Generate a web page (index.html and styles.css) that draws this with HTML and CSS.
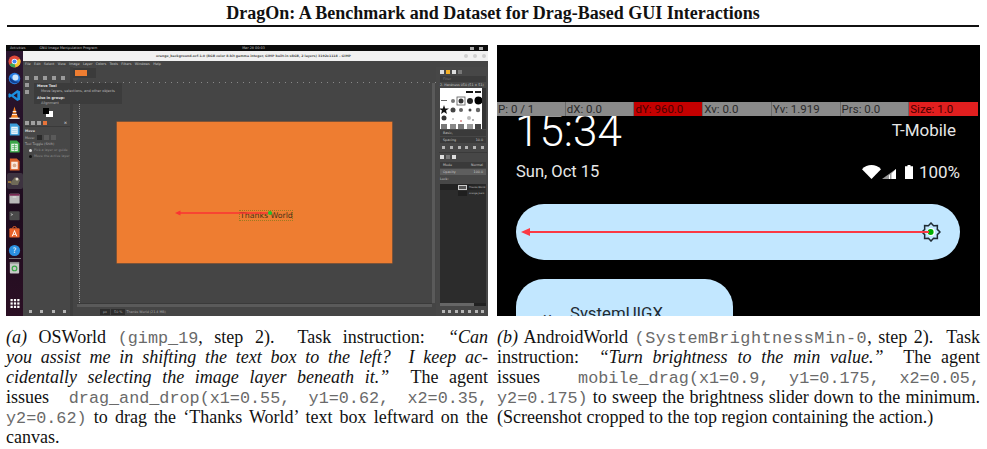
FILE: index.html
```html
<!DOCTYPE html>
<html lang="en">
<head>
    <meta charset="UTF-8">
    <meta name="viewport" content="width=device-width, initial-scale=1.0">
    <title>DragOn figure</title>
    <link rel="stylesheet" href="styles.css">
</head>
<body>
<header class="paper-head">DragOn: A Benchmark and Dataset for Drag-Based GUI Interactions</header>

<div class="figure-row">
    <figure class="sub-figure">
        <div class="shot desktop">
            <div class="top-bar">
                <span>Activities</span>
                <span class="top-app">GNU Image Manipulation Program</span>
                <span class="top-clock">Mar 28 00:03</span>
                <span class="top-tray"><i></i><i></i></span>
            </div>
            <div class="desk-body">
                <nav class="dock">
                    <svg class="dock-icon" viewBox="0 0 14 14"><circle cx="7" cy="7" r="6.5" fill="#e04a3a"/><path d="M7 7 1.500 10.500A6.500 6.500 0 0 0 8 13.400Z" fill="#3aa655"/><path d="M7 7 8 13.400A6.500 6.500 0 0 0 12.800 4Z" fill="#f4c430"/><circle cx="7" cy="7" r="3" fill="#fff"/><circle cx="7" cy="7" r="2.200" fill="#4285f4"/></svg>
                    <svg class="dock-icon" viewBox="0 0 14 14"><circle cx="7" cy="7" r="6.200" fill="#2a7de1"/><circle cx="8" cy="6" r="3.200" fill="#cfe6fb"/><path d="M2 5C4 8 7 11 12 10 10 13 4 13 2 9Z" fill="#123f8f"/></svg>
                    <svg class="dock-icon" viewBox="0 0 14 14"><path d="M10 1 13 2.500V11.500L10 13 3.500 8 1.500 9.500 0.500 8.700V5.300L1.500 4.500 3.500 6ZM10 4.300 6 7 10 9.700Z" fill="#1c8fe0"/></svg>
                    <svg class="dock-icon" viewBox="0 0 14 14"><path d="M7 .5 9.200 8H4.800Z" fill="#f58220"/><path d="M4.500 8.500H9.500L11 13H3Z" fill="#f58220"/><path d="M5 6H9M4.300 9H9.700" stroke="#fff" stroke-width="1"/><rect x="1.500" y="12.500" width="11" height="1.500" fill="#e8e8e8"/></svg>
                    <svg class="dock-icon" viewBox="0 0 14 14"><path d="M2 .5H9.500L12.500 3.500V13.500H2Z" fill="#3b9cd9"/><rect x="3.500" y="4" width="7" height="8" fill="#e8f4fb"/><path d="M4.500 6H9.500M4.500 8H9.500M4.500 10H9.500" stroke="#8cc4e8" stroke-width=".7"/></svg>
                    <svg class="dock-icon" viewBox="0 0 14 14"><path d="M2 .5H9.500L12.500 3.500V13.500H2Z" fill="#3aa648"/><rect x="3.500" y="4" width="7" height="8" fill="#e8f7ea"/><path d="M4.500 6H9.500M4.500 8H9.500M4.500 10H9.500M7 4.500V11.500" stroke="#3aa648" stroke-width=".7"/></svg>
                    <svg class="dock-icon" viewBox="0 0 14 14"><path d="M2 .5H9.500L12.500 3.500V13.500H2Z" fill="#d9622b"/><rect x="3.500" y="4" width="7" height="8" fill="#fbeadf"/><circle cx="7" cy="8" r="2" fill="#d9a98b"/></svg>
                    <div class="dock-active"><svg viewBox="0 0 14 14"><path d="M2 9 7 3 12 6 10 11H4Z" fill="#6f6a58"/><circle cx="9" cy="5" r="1.500" fill="#e4dccb"/><path d="M0 8H3" stroke="#d8a33a" stroke-width="1.200"/></svg></div>
                    <svg class="dock-icon" viewBox="0 0 14 14"><rect x="1.500" y="2" width="11" height="10.500" rx="1" fill="#b9b9b9"/><rect x="1.500" y="2" width="11" height="2" fill="#7a2a55"/><rect x="5" y="5" width="4" height=".8" fill="#eee"/></svg>
                    <svg class="dock-icon" viewBox="0 0 14 14"><rect x="1.500" y="2.500" width="11" height="9.500" rx="1" fill="#4a4a4a"/><path d="M3 5 5 6 3 7" stroke="#ddd" fill="none" stroke-width=".7"/></svg>
                    <svg class="dock-icon" viewBox="0 0 14 14"><rect x="1.500" y="2.500" width="11" height="10" rx="1" fill="#e8622a"/><path d="M5 2.500A2 2 0 0 1 9 2.500" stroke="#e8622a" fill="none"/><path d="M7 4 10 11H8.800L8.200 9.500H5.800L5.200 11H4ZM6.200 8.500H7.800L7 6.300Z" fill="#fff"/></svg>
                    <svg class="dock-icon" viewBox="0 0 14 14"><circle cx="7" cy="7" r="6" fill="#2a8fe0"/><text x="7" y="10.200" class="help-mark">?</text></svg>
                    <i class="dock-sep"></i>
                    <svg class="dock-icon" viewBox="0 0 14 14"><rect x="2" y="1" width="10" height="12.500" rx="1" fill="#c8c8c8"/><rect x="2" y="1" width="10" height="1.800" fill="#8f8f8f"/><circle cx="7" cy="8" r="2.500" fill="none" stroke="#3aa648" stroke-width="1.300"/></svg>
                    <svg class="dock-grid" viewBox="0 0 8 8"><g fill="#fff"><rect x="0" y="0" width="2" height="2"/><rect x="3" y="0" width="2" height="2"/><rect x="6" y="0" width="2" height="2"/><rect x="0" y="3" width="2" height="2"/><rect x="3" y="3" width="2" height="2"/><rect x="6" y="3" width="2" height="2"/><rect x="0" y="6" width="2" height="2"/><rect x="3" y="6" width="2" height="2"/><rect x="6" y="6" width="2" height="2"/></g></svg>
                </nav>
                <div class="gimp">
                    <div class="title-bar">
                        <span class="title-text">orange_background.xcf-1.0 (RGB color 8-bit gamma integer, GIMP built-in sRGB, 2 layers) 3192x1118 – GIMP</span>
                        <span class="win-buttons"><i></i><i></i><i></i></span>
                    </div>
                    <div class="menu-bar">
                        <span>File</span><span>Edit</span><span>Select</span><span>View</span><span>Image</span><span>Layer</span><span>Colors</span><span>Tools</span><span>Filters</span><span>Windows</span><span>Help</span>
                    </div>
                    <div class="gimp-main">
                        <aside class="toolbox">
                            <div class="tool-grid">
                                <i></i><i></i><i></i><i></i><i></i><i></i><i></i><i></i><i></i><i></i><i></i><i></i>
                            </div>
                            <div class="swatch"><i class="swatch-bg"></i><i class="swatch-fg"></i></div>
                            <div class="option-tabs"><i></i><i></i><i></i><i class="tab-orange"></i><b>×</b></div>
                            <div class="options">
                                <div class="option-title">Move</div>
                                <div class="option-row">Move: <i class="opt-on"></i><i></i><i></i></div>
                                <div>Tool Toggle (Shift)</div>
                                <div class="radio radio-on">Pick a layer or guide</div>
                                <div class="radio">Move the active layer</div>
                            </div>
                            <div class="panel-foot"><i></i><i></i><i></i><i></i></div>
                        </aside>
                        <main class="image-pane">
                            <div class="image-tabs"><span class="image-tab"><i></i></span></div>
                            <div class="ruler-h"></div>
                            <div class="canvas-wrap">
                                <div class="ruler-v"></div>
                                <div class="canvas-area"><div class="orange-canvas"></div></div>
                                <div class="scroll-v"></div>
                            </div>
                            <div class="scroll-h"><i></i></div>
                            <div class="status-bar"><span class="status-box">px</span><span class="status-box">50 %</span><span>Thanks World (21.4 MB)</span></div>
                        </main>
                        <aside class="right-dock">
                            <div class="dock-tabs"><i class="tab-white"></i><i class="tab-gold"></i><i class="tab-white"></i><i></i></div>
                            <div class="filter-box">Filter</div>
                            <div class="dock-label">2. Hardness 050 (51 × 51)</div>
                            <div class="brushes">
                                <svg viewBox="0 0 42 41" preserveAspectRatio="none">
                                    <rect x="26" y="3" width="7" height="2" fill="#111"/><rect x="35" y="3" width="6" height="2" fill="#222"/>
                                    <rect x="1" y="12" width="6" height="1" fill="#666"/>
                                    <circle cx="13" cy="13" r="2" fill="#777"/><rect x="17" y="9" width="8" height="8" fill="none" stroke="#555" stroke-width=".8"/><circle cx="21" cy="13" r="2.500" fill="#333"/>
                                    <circle cx="30" cy="13" r="3" fill="#222"/><circle cx="38.500" cy="12.500" r="4" fill="#000"/>
                                    <path d="M4 17 5.200 20.500H9L6 22.500 7 26 4 24 1 26 2 22.500-1 20.500H2.800Z" fill="#111"/>
                                    <circle cx="13" cy="22" r="2.500" fill="#444"/><circle cx="21" cy="22" r="2" fill="#666"/><circle cx="30" cy="22" r="1.500" fill="#444"/><circle cx="38" cy="22" r="2.200" fill="#666"/>
                                    <circle cx="4" cy="30" r="2.500" fill="#333"/><circle cx="13" cy="31" r=".8" fill="#888"/><circle cx="21" cy="33" r=".8" fill="#b33"/><circle cx="29" cy="30" r="2" fill="#bbb"/><circle cx="33" cy="32" r="1" fill="#999"/>
                                    <rect x="1" y="36" width="6" height="5" fill="#777"/><rect x="10" y="36" width="6" height="5" fill="#888"/><rect x="18" y="36" width="6" height="5" fill="#777"/><rect x="27" y="36" width="6" height="5" fill="#999"/><rect x="35" y="36" width="6" height="5" fill="#444"/>
                                </svg>
                            </div>
                            <div class="dock-select">Basic,</div>
                            <div class="dock-field"><span>Spacing</span><span>10.0</span></div>
                            <div class="dock-icons"><i></i><i></i><i></i><i></i><i></i><i></i></div>
                            <div class="dock-divider"></div>
                            <div class="dock-tabs"><i class="tab-white"></i><i></i><i class="tab-white"></i></div>
                            <div class="dock-select dock-mode"><span>Mode</span><span>Normal</span></div>
                            <div class="dock-field dock-opacity"><span>Opacity</span><span>100.0</span></div>
                            <div class="dock-lock">Lock:</div>
                            <div class="layer layer-on"><i class="layer-thumb"></i><span>Thanks World</span></div>
                            <div class="layer"><i class="layer-thumb layer-dark"></i><span>orange_back</span></div>
                            <div class="layer-fill"></div>
                            <div class="layer-scroll"></div>
                            <div class="panel-foot panel-foot-right"><i></i><i></i><i></i><i></i><i></i><i></i><i></i></div>
                        </aside>
                    </div>
                </div>
            </div>
            <div class="tool-tip">
                <div class="tip-title">Move Tool</div>
                <div class="tip-line">Move layers, selections, and other objects</div>
                <div class="tip-title tip-group">Also in group:</div>
                <div class="tip-line">Alignment</div>
            </div>
            <div class="thanks-box">Thanks World</div>
            <svg class="drag-arrow gimp-arrow" viewBox="0 0 98 8"><path d="M4 4H95" stroke="#fb3333" stroke-width="1.600"/><path d="M0 4 5.500 1.500V6.500Z" fill="#fb3333"/><circle cx="95" cy="4" r="2" fill="#1fc62e"/></svg>
        </div>
        <figcaption class="caption">
            <div class="line"><em>(a)</em> OSWorld <code>(gimp_19</code>, step 2). &nbsp;Task instruction: &nbsp;<em>“Can</em></div>
            <div class="line"><em>you assist me in shifting the text box to the left? &nbsp;I keep ac-</em></div>
            <div class="line"><em>cidentally selecting the image layer beneath it.”</em> &nbsp;The agent</div>
            <div class="line">issues <code class="push-small">drag_and_drop(x1=0.55, y1=0.62, x2=0.35,</code></div>
            <div class="line"><code>y2=0.62)</code> to drag the ‘Thanks World’ text box leftward on the</div>
            <div class="line line-end">canvas.</div>
        </figcaption>
    </figure>

    <figure class="sub-figure">
        <div class="shot phone">
            <div class="pointer-bar">
                <span>P: 0 / 1</span>
                <span>dX: 0.0</span>
                <span class="bar-dark-red">dY: 960.0</span>
                <span>Xv: 0.0</span>
                <span>Yv: 1.919</span>
                <span>Prs: 0.0</span>
                <span class="bar-red">Size: 1.0</span>
            </div>
            <div class="clock-row">
                <div class="clock">15:34</div>
                <div class="carrier">T-Mobile</div>
            </div>
            <div class="status-row">
                <span>Sun, Oct 15</span>
                <span class="status-icons">
                    <svg class="wifi" viewBox="0 0 19 14"><path d="M0 4.200C5.200-1.400 13.800-1.400 19 4.200L9.500 14Z" fill="#fff"/></svg>
                    <svg class="signal" viewBox="0 0 14 10"><path d="M14 0V10H0Z" fill="#fff" fill-opacity=".6"/><path d="M8 5.500V10H7V6.500ZM14 0V10H9.500V4.500Z" fill="#fff"/></svg>
                    <svg class="battery" viewBox="0 0 8 14"><path d="M2.500 0H5.500V1.200H8V14H0V1.200H2.500Z" fill="#fff"/></svg>
                    <span class="battery-text">100%</span>
                </span>
            </div>
            <div class="brightness-pill">
                <svg class="sun" viewBox="0 0 20 20"><path d="M10 1 12.600 3.700 16.400 3.600 16.300 7.400 19 10 16.300 12.600 16.400 16.400 12.600 16.300 10 19 7.400 16.300 3.600 16.400 3.700 12.600 1 10 3.700 7.400 3.600 3.600 7.400 3.700Z" fill="none" stroke="#1f2b33" stroke-width="1.500"/><circle cx="10" cy="10" r="4" fill="#fff"/><circle cx="9.600" cy="10" r="3" fill="#00b000"/></svg>
                <svg class="drag-arrow phone-arrow" viewBox="0 0 408 10"><path d="M4 5H408" stroke="#fb3a44" stroke-width="2.200"/><path d="M0 5 9 1V9Z" fill="#fb3a44"/></svg>
            </div>
            <div class="system-card"><span class="card-mark">×</span><span>SystemUIGX</span></div>
        </div>
        <figcaption class="caption">
            <div class="line"><em>(b)</em> AndroidWorld <code class="code-wide">(SystemBrightnessMin-0</code>, step 2). &nbsp;Task</div>
            <div class="line">instruction: &nbsp;<em>“Turn brightness to the min value.”</em> &nbsp;The agent</div>
            <div class="line">issues <code class="push-large">mobile_drag(x1=0.9, y1=0.175, x2=0.05,</code></div>
            <div class="line"><code>y2=0.175)</code> to sweep the brightness slider down to the minimum.</div>
            <div class="line line-end">(Screenshot cropped to the top region containing the action.)</div>
        </figcaption>
    </figure>
</div>
</body>
</html>
```

FILE: styles.css
```css
:root {
    --orange: #ee7d31;
    --gimp-bg: #454545;
    --gimp-panel: #474747;
    --gimp-dark: #2c2c2c;
    --gimp-text: #c8c8c8;
    --pill: #c2e7ff;
}

* {
    margin: 0;
    padding: 0;
    box-sizing: border-box;
}

body {
    width: 987px;
    height: 449px;
    overflow: hidden;
    background-color: white;
    color: #111;
    font-family: "Liberation Serif", serif;
}

i {
    display: block;
}

.paper-head {
    height: 27px;
    padding-top: 3px;
    border-bottom: 2px solid #111;
    margin: 0 8px 0 7px;
    text-align: center;
    font-size: 18px;
    line-height: 20px;
    font-weight: bold;
}

.figure-row {
    display: grid;
    grid-template-columns: 482px 483px;
    gap: 9px;
    margin: 18px 0 0 6px;
}

.shot {
    position: relative;
    height: 271px;
}

/* caption text */
.caption {
    margin-top: 11px;
    font-size: 18px;
    line-height: 20px;
}

.line {
    height: 20px;
    white-space: nowrap;
    text-align: justify;
    text-align-last: justify;
}

.line-end {
    text-align-last: left;
}

.caption code {
    font-family: "Liberation Mono", monospace;
    font-size: 16.800px;
    line-height: 0;
    color: #6a6a6a;
}

.caption .code-wide {
    letter-spacing: .5px;
}

.caption .push-small {
    margin-left: 7px;
}

.caption .push-large {
    margin-left: 24px;
}

/* left screenshot: desktop with gimp */
.desktop {
    display: flex;
    flex-direction: column;
    overflow: hidden;
    background-color: var(--gimp-bg);
    font-family: "DejaVu Sans", sans-serif;
    font-size: 4px;
    color: var(--gimp-text);
}

.top-bar {
    height: 6px;
    background-color: #0b0b0b;
    display: flex;
    align-items: center;
    padding-left: 4px;
    font-size: 3.400px;
    flex-shrink: 0;
}

.top-app {
    margin-left: 14px;
}

.top-clock {
    margin-left: 145px;
}

.top-tray {
    margin-left: auto;
    margin-right: 5px;
    display: flex;
    gap: 5px;
}

.top-tray i {
    width: 4px;
    height: 3px;
    background-color: #aaa;
}

.desk-body {
    flex: 1;
    display: flex;
    min-height: 0;
}

.dock {
    width: 17px;
    background: linear-gradient(#2b1630, #1e0c1e 60%, #2b0f24);
    display: flex;
    flex-direction: column;
    align-items: center;
    padding-top: 3.500px;
    gap: 4.200px;
    flex-shrink: 0;
}

.dock-icon {
    width: 13px;
    height: 13px;
    flex-shrink: 0;
}

.help-mark {
    font-size: 8px;
    fill: white;
    text-anchor: middle;
}

.dock-active {
    width: 16px;
    height: 16px;
    margin: -1.500px 0;
    background-color: #3d3340;
    border-radius: 2px;
    padding: 1px;
    flex-shrink: 0;
}

.dock-sep {
    width: 12px;
    height: 1px;
    background-color: #777;
    flex-shrink: 0;
    margin: -2.500px 0;
}

.dock-grid {
    width: 10px;
    height: 9px;
    margin-top: 21px;
    flex-shrink: 0;
}

.gimp {
    flex: 1;
    display: flex;
    flex-direction: column;
    min-width: 0;
}

.title-bar {
    height: 10px;
    background-color: #f1f1f1;
    color: #555;
    display: grid;
    grid-template-columns: 1fr;
    align-items: center;
    font-size: 3.200px;
    font-weight: bold;
    flex-shrink: 0;
    position: relative;
}

.title-text {
    text-align: center;
    padding-right: 4px;
    white-space: nowrap;
}

.win-buttons {
    position: absolute;
    right: 2px;
    top: 3px;
    display: flex;
    gap: 5px;
}

.win-buttons i {
    width: 4px;
    height: 4px;
    border-radius: 50%;
    background-color: #cfcfcf;
}

.menu-bar {
    height: 6px;
    display: flex;
    align-items: center;
    gap: 3.300px;
    padding-left: 2px;
    font-size: 3.400px;
    flex-shrink: 0;
}

.gimp-main {
    flex: 1;
    display: flex;
    min-height: 0;
}

.toolbox {
    width: 50px;
    display: flex;
    flex-direction: column;
    background-color: var(--gimp-panel);
    border-right: 3px solid #3e3e3e;
    padding-left: 2px;
    flex-shrink: 0;
}

.tool-grid {
    display: grid;
    grid-template-columns: repeat(5, 4px);
    column-gap: 5px;
    row-gap: 3px;
    grid-auto-rows: 4px;
    padding-top: 9px;
    height: 40px;
}

.tool-grid i {
    width: 4px;
    height: 4px;
    background-color: #9a9a9a;
}

.swatch {
    position: relative;
    height: 11px;
    margin-left: 18px;
}

.swatch-fg {
    position: absolute;
    left: 0;
    top: 1px;
    width: 6px;
    height: 6px;
    background-color: black;
}

.swatch-bg {
    position: absolute;
    left: 3px;
    top: 4px;
    width: 7px;
    height: 6px;
    background-color: white;
}

.option-tabs {
    height: 8px;
    display: flex;
    align-items: center;
    gap: 2px;
    margin-top: 1px;
    border-bottom: 1px solid #3a3a3a;
}

.option-tabs i {
    width: 4px;
    height: 4px;
    background-color: #a0a0a0;
}

.option-tabs .tab-orange {
    background-color: #e8743a;
}

.option-tabs b {
    margin-left: auto;
    margin-right: 3px;
    font-size: 4px;
}

.options {
    display: flex;
    flex-direction: column;
    gap: 2px;
    font-size: 3.300px;
    padding-top: 2px;
    color: #b0b0b0;
    flex: 1;
}

.option-title {
    color: #ddd;
    font-weight: bold;
}

.option-row {
    display: flex;
    align-items: center;
    gap: 2px;
}

.option-row i {
    width: 5px;
    height: 5px;
    background-color: #5a5a5a;
}

.option-row .opt-on {
    background-color: #2a2a2a;
}

.radio {
    display: flex;
    align-items: center;
    gap: 2px;
    padding-left: 4px;
    color: #8c8c8c;
}

.radio::before {
    content: "";
    width: 3px;
    height: 3px;
    border-radius: 50%;
    background-color: #111;
}

.radio-on::before {
    background-color: #ddd;
}

.panel-foot {
    height: 10px;
    display: flex;
    align-items: center;
    justify-content: space-around;
    flex-shrink: 0;
}

.panel-foot i {
    width: 3px;
    height: 3px;
    background-color: #b5b5b5;
}

.image-pane {
    flex: 1;
    display: flex;
    flex-direction: column;
    min-width: 0;
    background-color: var(--gimp-bg);
}

.image-tabs {
    height: 12px;
    display: flex;
    align-items: flex-start;
    padding-top: 1px;
    flex-shrink: 0;
}

.image-tab {
    width: 23px;
    height: 10px;
    background-color: #3b3b3b;
    padding: 2px;
}

.image-tab i {
    width: 12px;
    height: 6px;
    background-color: var(--orange);
}

.ruler-h {
    height: 4px;
    margin-left: 2px;
    flex-shrink: 0;
    background: repeating-linear-gradient(90deg, #8a8a8a 0 1px, transparent 1px 6px);
    background-size: 100% 1px;
    background-position: bottom;
    background-repeat: no-repeat;
}

.canvas-wrap {
    flex: 1;
    display: flex;
    min-height: 0;
}

.ruler-v {
    width: 6px;
    margin-left: 1px;
    border-right: 1px dotted #9a9a9a;
    flex-shrink: 0;
}

.canvas-area {
    flex: 1;
    padding: 39px 0 0 37px;
}

.orange-canvas {
    width: 275px;
    height: 141px;
    background-color: var(--orange);
    box-shadow: 0 0 0 .5px #b5632a;
}

.scroll-v {
    width: 3px;
    margin-right: 1px;
    background-color: #5a5a5a;
    flex-shrink: 0;
}

.scroll-h {
    height: 4px;
    background-color: #5a5a5a;
    border-top: 1px solid #3a3a3a;
    flex-shrink: 0;
    margin: 0 4px 0 4px;
}

.status-bar {
    height: 9px;
    display: flex;
    align-items: center;
    gap: 1px;
    padding-left: 27px;
    font-size: 3.300px;
    flex-shrink: 0;
    color: #aaa;
}

.status-box {
    background-color: #2d2d2d;
    padding: 1px 3px;
}

.right-dock {
    width: 52px;
    display: flex;
    flex-direction: column;
    background-color: var(--gimp-panel);
    padding: 0 2px 0 4px;
    flex-shrink: 0;
    font-size: 3.300px;
}

.dock-tabs {
    height: 8px;
    display: flex;
    align-items: center;
    gap: 2px;
    flex-shrink: 0;
}

.right-dock > .dock-tabs:first-child {
    height: 9px;
}

.dock-tabs i {
    width: 4px;
    height: 4px;
    background-color: #777;
}

.dock-tabs .tab-white {
    background-color: #ddd;
}

.dock-tabs .tab-gold {
    background-color: #f5b025;
}

.filter-box {
    height: 6px;
    line-height: 6px;
    background-color: #3b3b3b;
    color: #777;
    padding-left: 3px;
    flex-shrink: 0;
}

.dock-label {
    height: 6px;
    line-height: 6px;
    white-space: nowrap;
    flex-shrink: 0;
}

.brushes {
    height: 41px;
    background-color: white;
    border-right: 4px solid #333;
    flex-shrink: 0;
}

.brushes svg {
    display: block;
    width: 100%;
    height: 100%;
}

.dock-select,
.dock-field {
    height: 6px;
    line-height: 6px;
    background-color: #3a3a3a;
    padding: 0 3px;
    display: flex;
    justify-content: space-between;
    flex-shrink: 0;
    margin-top: 1px;
}

.dock-icons {
    height: 9px;
    display: flex;
    align-items: center;
    justify-content: space-around;
    flex-shrink: 0;
}

.dock-icons i {
    width: 3px;
    height: 3px;
    background-color: #b5b5b5;
}

.dock-divider {
    height: 1px;
    margin: 0 -1px;
    background-color: #3a3a3a;
    flex-shrink: 0;
}

.dock-opacity {
    background-color: #5e5e5e;
}

.dock-lock {
    height: 9px;
    line-height: 9px;
    flex-shrink: 0;
}

.layer {
    height: 6px;
    background-color: var(--gimp-dark);
    display: flex;
    align-items: center;
    gap: 2px;
    padding-left: 18px;
    font-size: 2.400px;
    white-space: nowrap;
    flex-shrink: 0;
}

.layer-on {
    background: linear-gradient(90deg, #222 0 60%, var(--gimp-dark));
}

.layer-thumb {
    width: 9px;
    height: 5px;
    background-color: #555;
    border: .5px solid #ccc;
    flex-shrink: 0;
}

.layer-dark {
    background-color: #1f1f1f;
    border-color: #1f1f1f;
}

.layer-fill {
    flex: 1;
    background-color: var(--gimp-dark);
}

.layer-scroll {
    height: 3px;
    background: linear-gradient(90deg, #666 0 74%, #222 74%);
    flex-shrink: 0;
}

/* things lying over the gimp window */
.tool-tip {
    position: absolute;
    left: 28px;
    top: 38px;
    width: 88px;
    height: 21px;
    background-color: #3c3c3c;
    padding: 1px 3px;
    font-size: 3.500px;
    line-height: 4.600px;
    color: #b8b8b8;
}

.tip-title {
    color: #e0e0e0;
    font-weight: bold;
}

.tip-line {
    padding-left: 4px;
}

.tip-group {
    margin-top: 3px;
}

.thanks-box {
    position: absolute;
    left: 233px;
    top: 165px;
    width: 54px;
    height: 11px;
    border: 1px dotted #9b7a20;
    font-size: 7.800px;
    line-height: 9px;
    text-align: center;
    color: #4a3218;
    white-space: nowrap;
}

.drag-arrow {
    position: absolute;
}

.gimp-arrow {
    left: 169px;
    top: 164px;
    width: 98px;
    height: 8px;
}

/* right screenshot: android quick settings */
.phone {
    background-color: black;
    color: white;
    font-family: Roboto, "Liberation Sans", sans-serif;
    display: flex;
    flex-direction: column;
    padding-right: 2px;
}

.pointer-bar {
    position: relative;
    z-index: 1;
    display: grid;
    grid-template-columns: repeat(7, 1fr);
    height: 14px;
    margin-top: 57px;
    background-color: #8a8a8a;
    color: #2a2a2a;
    font-size: 11.500px;
    line-height: 14px;
    flex-shrink: 0;
}

.pointer-bar span {
    padding-left: 1px;
    white-space: nowrap;
    border-right: 1px solid #6a6a6a;
}

.pointer-bar .bar-dark-red {
    background-color: #c40000;
    color: #4a0000;
}

.pointer-bar .bar-red {
    background-color: #e11f1f;
    color: #4a0000;
    border-right: 0;
}

.clock-row {
    height: 29px;
    display: flex;
    justify-content: space-between;
    padding: 0 22px 0 18px;
    flex-shrink: 0;
}

.clock {
    font-size: 44px;
    line-height: 30px;
    height: 30px;
    font-weight: 300;
}

.carrier {
    margin-top: 4px;
    font-size: 17px;
    line-height: 20px;
    color: #e6e6e6;
}

.status-row {
    display: flex;
    justify-content: space-between;
    align-items: center;
    height: 20px;
    margin: 17px 18px 0 19px;
    font-size: 16.500px;
    line-height: 20px;
    color: #e8e8e8;
    flex-shrink: 0;
}

.status-icons {
    display: flex;
    align-items: center;
    gap: 1px;
    font-size: 17px;
}

.wifi {
    width: 19px;
    height: 14px;
}

.signal {
    width: 14px;
    height: 10px;
    margin-top: 4px;
}

.battery {
    width: 8px;
    height: 14px;
    margin-left: 8px;
}

.battery-text {
    margin-left: 5px;
}

.brightness-pill {
    position: relative;
    height: 56px;
    margin: 22px 18px 0 19px;
    background-color: var(--pill);
    border-radius: 28px;
    flex-shrink: 0;
}

.sun {
    position: absolute;
    right: 19px;
    top: 18px;
    width: 20px;
    height: 20px;
}

.phone-arrow {
    left: 5px;
    top: 23px;
    width: 408px;
    height: 10px;
}

.system-card {
    width: 217px;
    height: 37px;
    margin: 19px 0 0 19px;
    background-color: var(--pill);
    border-radius: 28px 28px 0 0;
    color: #1f2b33;
    font-size: 16.800px;
    line-height: 20px;
    display: flex;
    padding: 24px 0 0 27px;
    gap: 18px;
    overflow: hidden;
    flex-shrink: 0;
}

.card-mark {
    margin-top: 5px;
}
```
